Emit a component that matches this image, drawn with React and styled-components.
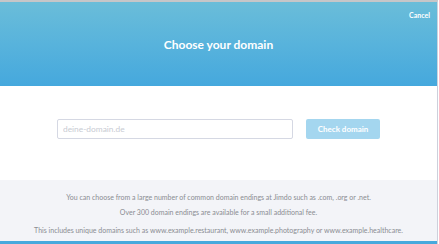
import React from "react";
import styled, { createGlobalStyle } from "styled-components";

const Global = createGlobalStyle`
  html, body { margin: 0; padding: 0; background: #ffffff; }
  body { font-family: Lato, "Open Sans", sans-serif; }
  * { box-sizing: border-box; }
`;

const Frame = styled.div`
  width: 438px;
  height: 244px;
  border-top: 2px solid #c6c6c8;
  border-right: 1px solid #cdd0dc;
  display: flex;
  flex-direction: column;
  overflow: hidden;
`;

const Header = styled.header`
  position: relative;
  height: 84px;
  background: linear-gradient(180deg, #6abdd9 0%, #58b3dc 50%, #45a8dd 100%);
  display: flex;
  align-items: center;
  justify-content: center;
`;

const Title = styled.h1`
  margin: 0;
  color: #ffffff;
  font-size: 12px;
  font-weight: 700;
  letter-spacing: 0;
`;

const Cancel = styled.button`
  position: absolute;
  top: 9px;
  right: 7px;
  background: none;
  border: 0;
  padding: 0;
  color: #ffffff;
  font-family: inherit;
  font-size: 7px;
  font-weight: 700;
  cursor: pointer;
`;

const Body = styled.section`
  height: 94px;
  background: #ffffff;
  display: flex;
  justify-content: center;
  align-items: flex-start;
  padding-top: 33px;
  gap: 13px;
`;

const Input = styled.input`
  width: 236px;
  height: 20px;
  border: 1px solid #d5d8e3;
  border-radius: 2px;
  padding: 0 5px;
  font-family: inherit;
  font-size: 8.4px;
  color: #555;
  outline: none;
  &::placeholder { color: #c8cbd3; }
`;

const CheckButton = styled.button`
  width: 74px;
  height: 20px;
  border: 0;
  border-radius: 2px;
  background: #a4d6ef;
  color: #ffffff;
  font-family: inherit;
  font-size: 8px;
  font-weight: 700;
  padding: 0;
`;

const Footer = styled.footer`
  height: 61px;
  background: #f3f4f8;
  display: flex;
  flex-direction: column;
  align-items: center;
  padding-top: 13px;
  color: #8a8c92;
  font-size: 7px;
`;

const Line = styled.p`
  margin: 0 0 ${(p) => p.$gap || 7}px;
  line-height: 8px;
  white-space: nowrap;
`;

const BottomBar = styled.div`
  height: 3px;
  background: #47a9dd;
`;

export default function App() {
  return (
    <>
      <Global />
      <Frame>
        <Header>
          <Title>Choose your domain</Title>
          <Cancel>Cancel</Cancel>
        </Header>
        <Body>
          <Input placeholder="deine-domain.de" />
          <CheckButton>Check domain</CheckButton>
        </Body>
        <Footer>
          <Line>You can choose from a large number of common domain endings at Jimdo such as .com, .org or .net.</Line>
          <Line $gap={10}>Over 300 domain endings are available for a small additional fee.</Line>
          <Line>This includes unique domains such as www.example.restaurant, www.example.photography or www.example.healthcare.</Line>
        </Footer>
        <BottomBar />
      </Frame>
    </>
  );
}
